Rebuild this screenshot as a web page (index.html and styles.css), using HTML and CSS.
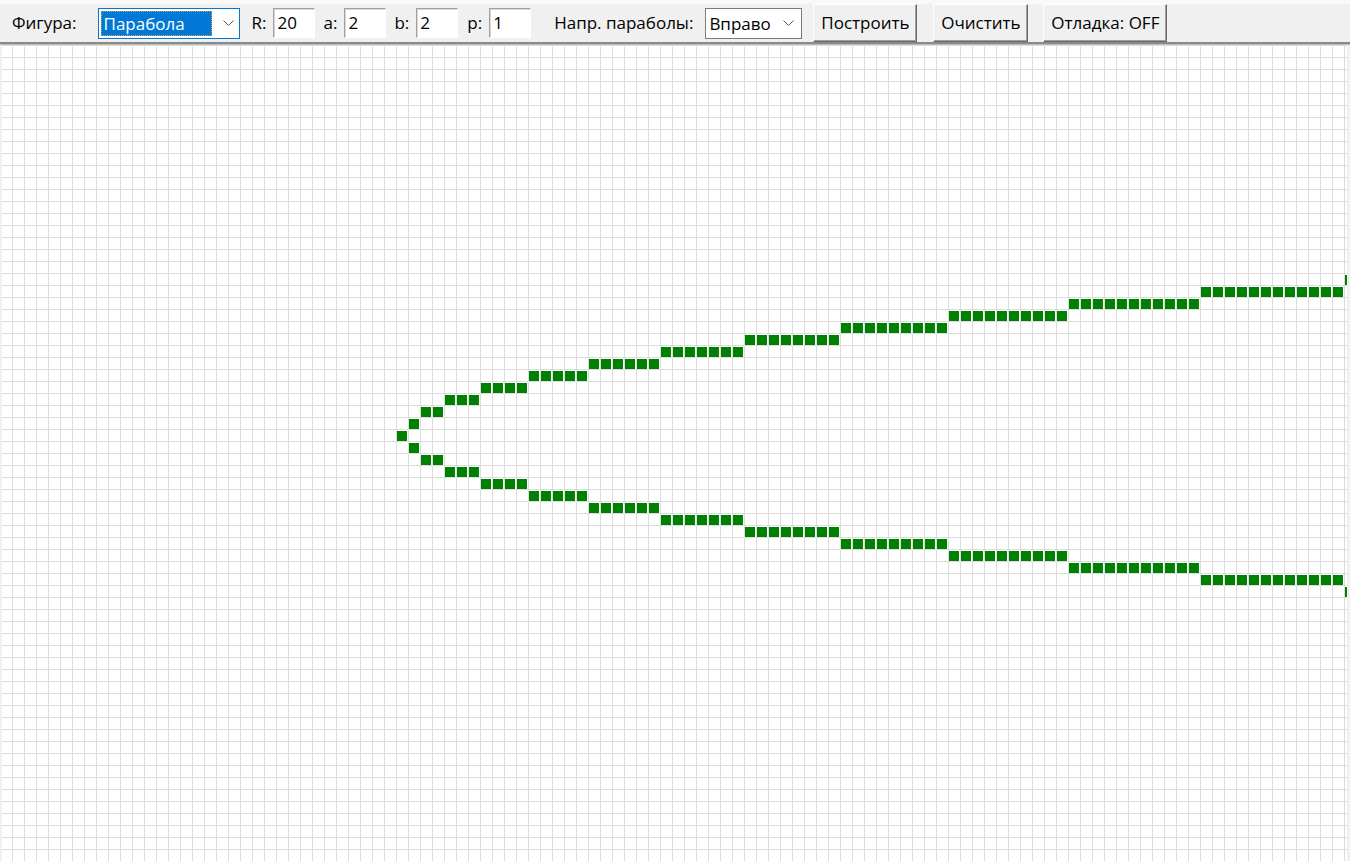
FILE: index.html
```html
<!DOCTYPE html>
<html lang="ru">
<head>
<meta charset="utf-8">
<title>Растровые фигуры</title>
<link rel="stylesheet" href="styles.css">
</head>
<body>
<div class="toolbar">
  <span class="lbl lbl-fig">Фигура:</span>
  <div class="combo combo-focus">
    <span class="combo-sel">Парабола</span>
    <svg class="chev" width="11" height="6" viewBox="0 0 11 6"><polyline points="0.5,0.5 5.5,5.5 10.5,0.5" fill="none" stroke="#606060" stroke-width="1"/></svg>
  </div>
  <span class="lbl lbl-r">R:</span>
  <div class="entry e-r">20</div>
  <span class="lbl lbl-a">a:</span>
  <div class="entry e-a">2</div>
  <span class="lbl lbl-b">b:</span>
  <div class="entry e-b">2</div>
  <span class="lbl lbl-p">p:</span>
  <div class="entry e-p">1</div>
  <span class="lbl lbl-dir">Напр. параболы:</span>
  <div class="combo combo-dir">
    <span class="combo-text">Вправо</span>
    <svg class="chev" width="11" height="6" viewBox="0 0 11 6"><polyline points="0.5,0.5 5.5,5.5 10.5,0.5" fill="none" stroke="#606060" stroke-width="1"/></svg>
  </div>
  <button class="btn btn-build">Построить</button>
  <button class="btn btn-clear">Очистить</button>
  <button class="btn btn-debug">Отладка: OFF</button>
</div>
<div class="canvas">
  <svg class="plot" width="1347" height="816" viewBox="0 0 1347 816">
    <defs>
      <pattern id="cell" width="12" height="12" patternUnits="userSpaceOnUse">
        <rect x="1" y="2" width="10" height="10" fill="#008000"/>
      </pattern>
    </defs>
    <g fill="url(#cell)">
      <rect x="396" y="384" width="12" height="12"/>
      <rect x="408" y="372" width="12" height="12"/>
      <rect x="420" y="360" width="24" height="12"/>
      <rect x="444" y="348" width="36" height="12"/>
      <rect x="480" y="336" width="48" height="12"/>
      <rect x="528" y="324" width="60" height="12"/>
      <rect x="588" y="312" width="72" height="12"/>
      <rect x="660" y="300" width="84" height="12"/>
      <rect x="744" y="288" width="96" height="12"/>
      <rect x="840" y="276" width="108" height="12"/>
      <rect x="948" y="264" width="120" height="12"/>
      <rect x="1068" y="252" width="132" height="12"/>
      <rect x="1200" y="240" width="144" height="12"/>
      <rect x="1344" y="228" width="156" height="12"/>
      <rect x="408" y="396" width="12" height="12"/>
      <rect x="420" y="408" width="24" height="12"/>
      <rect x="444" y="420" width="36" height="12"/>
      <rect x="480" y="432" width="48" height="12"/>
      <rect x="528" y="444" width="60" height="12"/>
      <rect x="588" y="456" width="72" height="12"/>
      <rect x="660" y="468" width="84" height="12"/>
      <rect x="744" y="480" width="96" height="12"/>
      <rect x="840" y="492" width="108" height="12"/>
      <rect x="948" y="504" width="120" height="12"/>
      <rect x="1068" y="516" width="132" height="12"/>
      <rect x="1200" y="528" width="144" height="12"/>
      <rect x="1344" y="540" width="156" height="12"/>
    </g>
  </svg>
</div>
</body>
</html>
```
FILE: styles.css
```css
html, body {
  margin: 0;
  padding: 0;
}
body {
  background: #f0f0f0;
  font-family: "Open Sans", "Noto Sans", sans-serif;
  font-size: 17px;
  color: #000;
  overflow: hidden;
  width: 1350px;
  height: 861px;
}
.toolbar {
  display: flex;
  align-items: center;
  box-sizing: border-box;
  height: 44px;
  padding-left: 12px;
  border-top: 4px solid #f9f9f9;
  border-bottom: 2px solid #8a8a8a;
  box-shadow: 0 1px 0 #bcbcbc;
  background: #f0f0f0;
}
.lbl {
  white-space: nowrap;
  line-height: 20px;
}
.combo {
  box-sizing: border-box;
  height: 31px;
  background: #fff;
  display: flex;
  align-items: center;
}
.combo-focus {
  width: 142px;
  margin-left: 21px;
  border: 1px solid #0078d7;
  padding-left: 2px;
}
.combo-sel {
  box-sizing: border-box;
  width: 111px;
  height: 25px;
  background: #0078d7;
  color: #fff;
  line-height: 23px;
  padding-left: 2px;
  border: 1px dotted #e0a040;
}
.combo-focus .chev {
  margin-left: 11px;
}
.combo-dir {
  width: 97px;
  margin-left: 12px;
  border: 1px solid #7a7a7a;
  padding-left: 3px;
}
.combo-text {
  width: 74px;
}
.lbl-r { margin-left: 12px; }
.lbl-a { margin-left: 8px; }
.lbl-b { margin-left: 8px; }
.lbl-p { margin-left: 9px; }
.lbl-dir { margin-left: 23px; }
.entry {
  box-sizing: border-box;
  width: 42px;
  height: 30px;
  background: #fff;
  border-top: 1px solid #a0a0a0;
  border-left: 1px solid #a0a0a0;
  border-right: 1px solid #fff;
  border-bottom: 1px solid #fff;
  box-shadow: inset 1px 1px 0 #d8d8d8;
  padding-left: 3px;
  line-height: 27px;
}
.e-r { margin-left: 7px; }
.e-a { margin-left: 7px; }
.e-b { margin-left: 7px; }
.e-p { margin-left: 7px; }
.btn {
  box-sizing: border-box;
  height: 38px;
  align-self: flex-start;
  background: #f0f0f0;
  font-family: inherit;
  font-size: inherit;
  color: #000;
  padding: 0;
  border-top: 1px solid #fff;
  border-left: 1px solid #fff;
  border-right: 1px solid #696969;
  border-bottom: 1px solid #696969;
  box-shadow: inset -1px -1px 0 #a0a0a0;
  line-height: 34px;
}
.btn-build { width: 104px; margin-left: 11px; }
.btn-clear { width: 95px; margin-left: 16px; }
.btn-debug { width: 124px; margin-left: 15px; }
.canvas {
  margin-top: 1px;
  height: 816px;
  background-color: #fff;
  background-image:
    linear-gradient(to right, #dcdcdc 1px, transparent 1px),
    linear-gradient(to bottom, #dcdcdc 1px, transparent 1px);
  background-size: 12px 12px;
  box-shadow: inset 2px 0 0 #f0f0f0, inset -3px 0 0 #f0f0f0;
}
.plot {
  display: block;
}
```
